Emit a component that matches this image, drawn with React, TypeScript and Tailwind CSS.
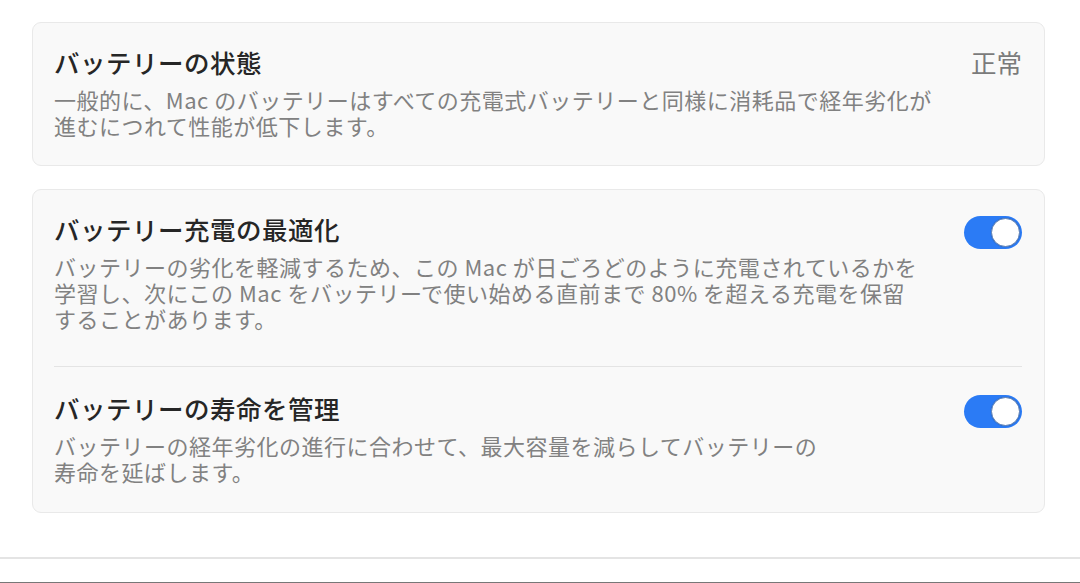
import React from 'react';

const font = { fontFamily: '"Noto Sans CJK JP", "Noto Sans", sans-serif' };

function Toggle() {
  return (
    <div className="relative mt-[3px] h-[33px] w-[58px] shrink-0 rounded-full bg-[#2b7bf5]">
      <div className="absolute right-[2px] top-[2px] h-[29px] w-[29px] rounded-full border border-[#5a7fb8] bg-white shadow-[0_0_1px_rgba(0,0,0,0.3)]" />
    </div>
  );
}

function Row({ title, lines, right }: { title: string; lines: string[]; right: React.ReactNode }) {
  return (
    <div className="flex items-start justify-between">
      <div>
        <h3 className="text-[25.5px] font-medium leading-[32px] tracking-[0.5px] text-[#262626]">{title}</h3>
        <p className="mt-[8px] whitespace-nowrap text-[22px] leading-[26px] tracking-[0.5px] text-[#818181]">
          {lines.map((l, i) => (
            <span key={i} className="block">{l}</span>
          ))}
        </p>
      </div>
      {right}
    </div>
  );
}

export default function App() {
  return (
    <div className="flex h-[583px] flex-col overflow-hidden bg-white" style={font}>
      <div className="flex flex-col gap-[23px] pl-[32px] pt-[22px]">
        <div className="w-[1013px] rounded-[9px] border border-[#e9e9e9] bg-[#f9f9f9] pb-[27px] pl-[21px] pr-[22px] pt-[23px]">
          <Row
            title="バッテリーの状態"
            lines={['一般的に、Mac のバッテリーはすべての充電式バッテリーと同様に消耗品で経年劣化が', '進むにつれて性能が低下します。']}
            right={<span className="text-[25.5px] leading-[32px] text-[#7b7b7b]">正常</span>}
          />
        </div>
        <div className="w-[1013px] rounded-[9px] border border-[#e9e9e9] bg-[#f9f9f9] pb-[28px] pl-[21px] pr-[22px] pt-[23px]">
          <Row
            title="バッテリー充電の最適化"
            lines={[
              'バッテリーの劣化を軽減するため、この Mac が日ごろどのように充電されているかを',
              '学習し、次にこの Mac をバッテリーで使い始める直前まで 80% を超える充電を保留',
              'することがあります。',
            ]}
            right={<Toggle />}
          />
          <div className="mb-[25px] mt-[35px] h-px bg-[#e4e4e4]" />
          <Row
            title="バッテリーの寿命を管理"
            lines={['バッテリーの経年劣化の進行に合わせて、最大容量を減らしてバッテリーの', '寿命を延ばします。']}
            right={<Toggle />}
          />
        </div>
      </div>
      <div className="mt-auto h-[26px] border-t-2 border-[#e4e4e4] bg-white">
        <div className="mt-[23px] h-px bg-[#777777]" />
      </div>
    </div>
  );
}
